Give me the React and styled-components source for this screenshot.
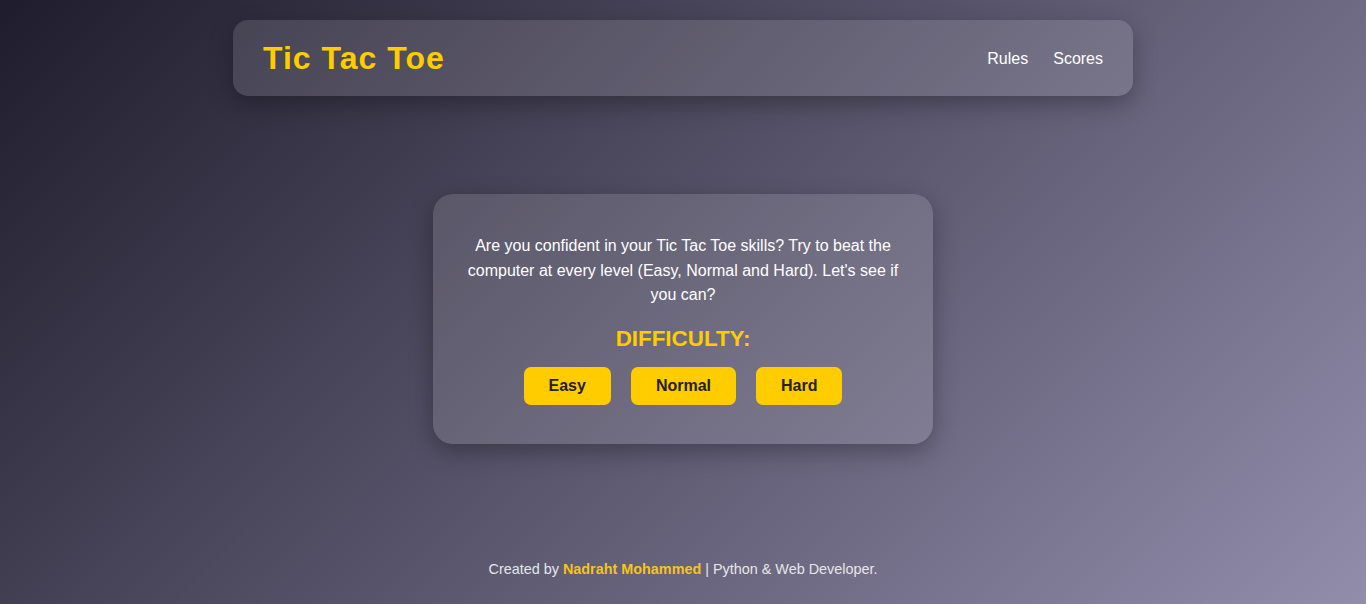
import React from "react";
import styled, { createGlobalStyle } from "styled-components";

const Global = createGlobalStyle`
  html, body { margin: 0; padding: 0; }
  body {
    min-height: 100vh;
    font-family: "Liberation Sans", Arial, sans-serif;
    background: linear-gradient(135deg, #1f1c2c, #928dab);
    color: #fff;
  }
  * { box-sizing: border-box; }
`;

const Page = styled.div`
  min-height: 100vh;
  display: flex;
  flex-direction: column;
  align-items: center;
`;

const Header = styled.header`
  width: 900px;
  height: 76px;
  margin-top: 20px;
  padding: 0 30px;
  display: flex;
  align-items: center;
  justify-content: space-between;
  background: rgba(255, 255, 255, 0.12);
  border-radius: 15px;
  box-shadow: 0 8px 24px rgba(0, 0, 0, 0.3);
`;

const Title = styled.h1`
  margin: 0;
  font-size: 32px;
  font-weight: 700;
  letter-spacing: 1px;
  color: #ffcc00;
`;

const Nav = styled.nav`
  display: flex;
  gap: 25px;
  padding-top: 1px;
`;

const NavLink = styled.a`
  color: #fff;
  font-size: 16px;
  text-decoration: none;
  cursor: pointer;
`;

const Main = styled.main`
  padding-top: 98px;
  display: flex;
  justify-content: center;
`;

const Card = styled.section`
  width: 500px;
  height: 250px;
  padding: 40px 30px;
  border-radius: 20px;
  background: rgba(255, 255, 255, 0.12);
  box-shadow: 0 8px 24px rgba(0, 0, 0, 0.3);
  text-align: center;
`;

const Intro = styled.p`
  margin: 0;
  font-size: 16px;
  line-height: 24.5px;
  color: #fff;
`;

const Heading = styled.h2`
  margin: 18px 0 15px;
  font-size: 22.4px;
  font-weight: 700;
  color: #ffcc00;
`;

const Buttons = styled.div`
  display: flex;
  justify-content: center;
  gap: 20px;
`;

const LevelButton = styled.button`
  height: 38px;
  padding: 0 25px;
  border: none;
  border-radius: 7px;
  background: #ffcc00;
  color: #222;
  font-family: "Liberation Sans", Arial, sans-serif;
  font-size: 16px;
  font-weight: 700;
  cursor: pointer;
`;

const Footer = styled.footer`
  margin-top: auto;
  padding: 20px 0 27px;
  font-size: 14.4px;
  color: #e6e6e6;
`;

const Author = styled.span`
  color: #f5c518;
  font-weight: 700;
`;

export default function App() {
  return (
    <>
      <Global />
      <Page>
        <Header>
          <Title>Tic Tac Toe</Title>
          <Nav>
            <NavLink>Rules</NavLink>
            <NavLink>Scores</NavLink>
          </Nav>
        </Header>
        <Main>
          <Card>
            <Intro>
              Are you confident in your Tic Tac Toe skills? Try to beat the computer at every level (Easy, Normal and Hard). Let's see if you can?
            </Intro>
            <Heading>DIFFICULTY:</Heading>
            <Buttons>
              <LevelButton>Easy</LevelButton>
              <LevelButton>Normal</LevelButton>
              <LevelButton>Hard</LevelButton>
            </Buttons>
          </Card>
        </Main>
        <Footer>
          Created by <Author>Nadraht Mohammed</Author> | Python &amp; Web Developer.
        </Footer>
      </Page>
    </>
  );
}
